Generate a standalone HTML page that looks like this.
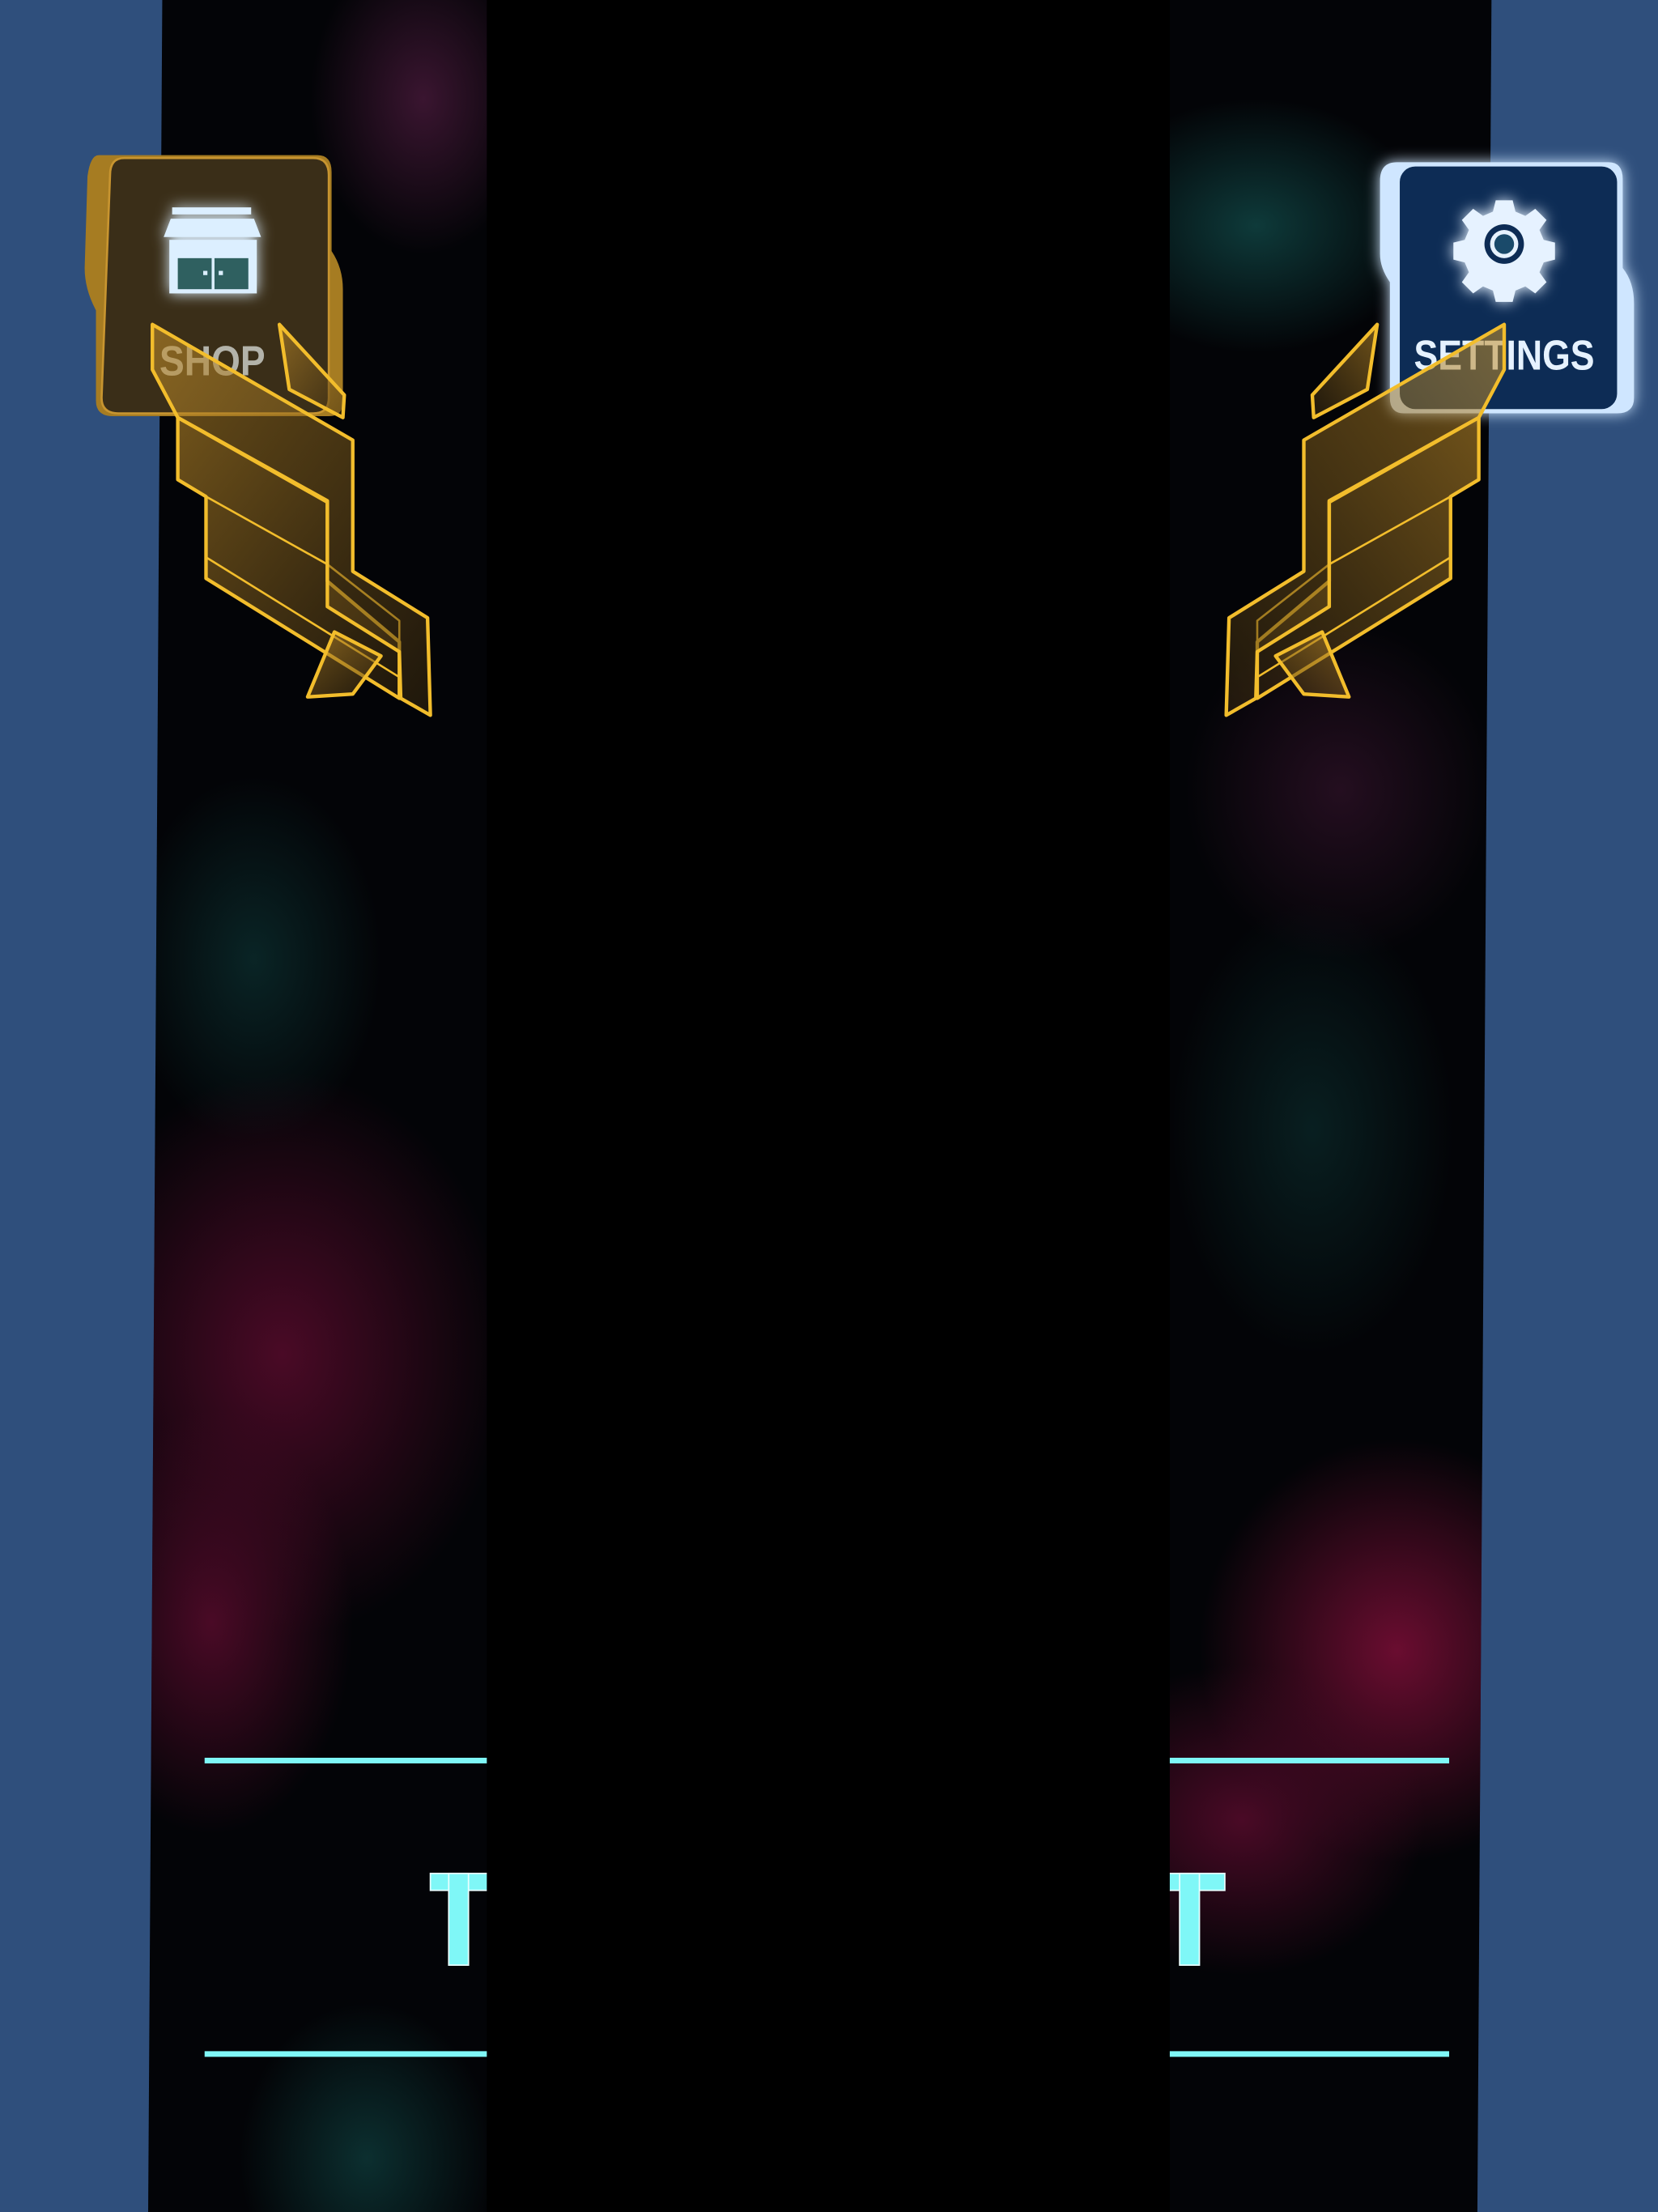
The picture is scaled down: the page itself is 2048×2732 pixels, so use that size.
<!DOCTYPE html>
<html><head><meta charset="utf-8"><style>
html,body{margin:0;padding:0;background:#2f4f7c;}
svg{display:block}
</style></head><body>
<svg width="2048" height="2732" viewBox="0 0 1175 1568" preserveAspectRatio="none" xmlns="http://www.w3.org/2000/svg">
<defs>
<filter id="glow" x="-30%" y="-30%" width="160%" height="160%"><feGaussianBlur stdDeviation="5" result="g"/><feMerge><feMergeNode in="g"/><feMergeNode in="SourceGraphic"/></feMerge></filter>
<clipPath id="strip"><polygon points="115,0 1057,0 1047,1568 105,1568"/></clipPath>
<radialGradient id="red"><stop offset="0" stop-color="#6a0d30"/><stop offset="1" stop-color="#6a0d30" stop-opacity="0"/></radialGradient>
<radialGradient id="red2"><stop offset="0" stop-color="#4a0a26"/><stop offset="1" stop-color="#4a0a26" stop-opacity="0"/></radialGradient>
<radialGradient id="teal"><stop offset="0" stop-color="#0e3a3a"/><stop offset="1" stop-color="#0e3a3a" stop-opacity="0"/></radialGradient>
<radialGradient id="purp"><stop offset="0" stop-color="#3a1530"/><stop offset="1" stop-color="#3a1530" stop-opacity="0"/></radialGradient>
<linearGradient id="gw" x1="0" y1="0" x2="1" y2="1"><stop offset="0" stop-color="#c8922a" stop-opacity=".55"/><stop offset="1" stop-color="#3a2a10" stop-opacity=".5"/></linearGradient>
</defs>
<rect width="1175" height="1568" fill="#2f4f7c"/>
<polygon points="115,0 1057,0 1047,1568 105,1568" fill="#030407"/>
<g clip-path="url(#strip)">
  <ellipse cx="300" cy="70" rx="80" ry="110" fill="url(#purp)"/>
  <ellipse cx="180" cy="680" rx="90" ry="130" fill="url(#teal)" opacity=".6"/>
  <ellipse cx="200" cy="960" rx="160" ry="200" fill="url(#red2)"/>
  <ellipse cx="150" cy="1150" rx="100" ry="150" fill="url(#red2)"/>
  <ellipse cx="260" cy="1530" rx="90" ry="110" fill="url(#teal)" opacity=".8"/>
  <ellipse cx="890" cy="160" rx="120" ry="90" fill="url(#teal)"/>
  <ellipse cx="930" cy="800" rx="100" ry="160" fill="url(#teal)" opacity=".5"/>
  <ellipse cx="990" cy="1170" rx="140" ry="150" fill="url(#red)"/>
  <ellipse cx="880" cy="1290" rx="130" ry="110" fill="url(#red2)"/>
  <ellipse cx="950" cy="560" rx="110" ry="120" fill="url(#purp)" opacity=".6"/>
</g>
<rect x="145" y="1246" width="882" height="4" fill="#7ff7f7"/>
<rect x="145" y="1454" width="882" height="4" fill="#7ff7f7"/>
<g fill="#7ff7f7" stroke="#e8ffff" stroke-width="1">
  <rect x="305" y="1328" width="68" height="12"/><rect x="318" y="1328" width="14" height="65"/>
  <rect x="800" y="1328" width="68" height="12"/><rect x="836" y="1328" width="14" height="65"/>
</g>
<rect x="345" y="0" width="484" height="1568" fill="#000"/>

<!-- SHOP button -->
<path d="M70,110 L225,110 Q235,110 235,122 L235,178 Q243,190 243,205 L243,285 Q243,295 233,295 L80,295 Q68,295 68,284 L68,220 Q60,205 60,190 L62,125 Q64,110 70,110Z" fill="#a67c22"/>
<path d="M88,112 L222,112 Q233,112 233,124 L233,282 Q233,293 222,293 L84,293 Q72,293 72,282 L78,124 Q78,112 88,112Z" fill="#3a2e18" stroke="#c89530" stroke-width="1.5"/>
<g filter="url(#glow)" fill="#dcefff">
  <rect x="122" y="147" width="56" height="5"/>
  <polygon points="121,155 180,155 185,168 116,168"/>
  <rect x="120" y="170" width="62" height="38"/>
</g>
<rect x="126" y="183" width="24" height="22" fill="#2f6060"/><rect x="152" y="183" width="24" height="22" fill="#2f6060"/>
<rect x="144" y="192" width="3" height="3" fill="#dcefff"/><rect x="155" y="192" width="3" height="3" fill="#dcefff"/>
<text x="113" y="266" textLength="75" lengthAdjust="spacingAndGlyphs" font-family="Liberation Sans, sans-serif" font-weight="bold" font-size="30" fill="#c9cbc4" opacity=".85">SHOP</text>

<!-- SETTINGS button -->
<path d="M990,115 L1140,115 Q1150,115 1150,127 L1150,190 Q1158,200 1158,215 L1158,282 Q1158,293 1146,293 L995,293 Q985,293 985,282 L985,200 Q978,190 978,180 L978,128 Q978,115 990,115Z" fill="#cfe6ff" filter="url(#glow)"/>
<rect x="992" y="118" width="154" height="172" rx="11" fill="#0d2c55"/>
<g fill="#e6f2ff" filter="url(#glow)">
  <path d="M1060,142 h12 l2,8 l7,3 l7,-5 l8,8 l-5,7 l3,7 l8,2 v12 l-8,2 l-3,7 l5,7 l-8,8 l-7,-5 l-7,3 l-2,8 h-12 l-2,-8 l-7,-3 l-7,5 l-8,-8 l5,-7 l-3,-7 l-8,-2 v-12 l8,-2 l3,-7 l-5,-7 l8,-8 l7,5 l7,-3z"/>
</g>
<circle cx="1066" cy="173" r="14" fill="#0d2c55"/>
<circle cx="1066" cy="173" r="10" fill="#e6f2ff"/>
<circle cx="1066" cy="173" r="7" fill="#1a4a6a"/>
<text x="1002" y="262" textLength="128" lengthAdjust="spacingAndGlyphs" font-family="Liberation Sans, sans-serif" font-weight="bold" font-size="30" fill="#e6f2ff">SETTINGS</text>

<g id="wing" fill="url(#gw)" stroke="#f2bd2c" stroke-width="2.5" stroke-linejoin="round">
  <polygon points="126,296 232,356 232,412 283,455 283,495 146,410 146,352 126,340"/>
  <polygon points="146,352 232,400 283,440 283,480 146,395" fill="none" stroke-width="1.5"/>
  <polygon points="108,230 250,312 250,405 303,438 305,507 284,495 283,462 232,430 232,355 126,296 108,262"/>
  <polygon points="198,230 244,280 243,296 205,276"/>
  <polygon points="237,448 270,465 250,492 218,494"/>
</g>
<use href="#wing" transform="translate(1174,0) scale(-1,1)"/>
</svg>
</body></html>
